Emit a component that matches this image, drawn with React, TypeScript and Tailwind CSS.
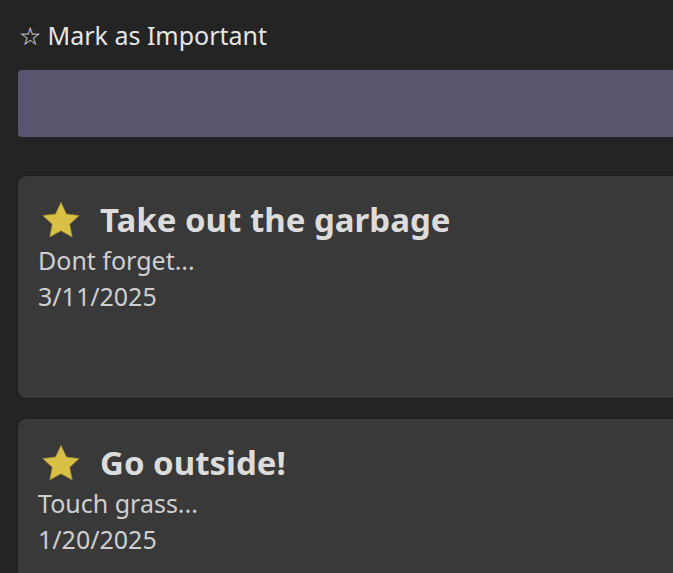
import React from "react";

function Star() {
  return (
    <svg width="40" height="38" viewBox="0 0 24 23" className="shrink-0">
      <path
        d="M12 0.8l3.3 7.1 7.7.9-5.7 5.3 1.5 7.7L12 18l-6.8 3.8 1.5-7.7L1 8.8l7.7-.9z"
        fill="#d9c046"
        stroke="#a08a2a"
        strokeWidth="0.4"
      />
    </svg>
  );
}

function Card({ title, body, date }: { title: string; body: string; date: string }) {
  return (
    <div className="rounded-lg bg-[#393939] pl-[20px] pt-[24px] pb-[20px] h-[222px] shadow-[0_0_2px_rgba(0,0,0,0.6)]">
      <div className="flex items-center gap-[19px] pl-[3px]">
        <Star />
        <span className="text-[33px] font-bold leading-[40px] text-[#dcdcdc]">{title}</span>
      </div>
      <div className="text-[25px] leading-[36px] text-[#cfcfcf] mt-[2px]">{body}</div>
      <div className="text-[25px] leading-[36px] text-[#cfcfcf]">{date}</div>
    </div>
  );
}

export default function App() {
  return (
    <div
      className="w-[673px] h-[573px] overflow-hidden bg-[#242424] pl-[18px] pt-[18px]"
      style={{ fontFamily: '"Noto Sans", "Open Sans", sans-serif' }}
    >
      <div className="text-[25px] leading-[34px] text-[#e6e6e6] pl-[1px]">☆ Mark as Important</div>
      <div className="mt-[18px] h-[67px] w-[700px] rounded bg-[#58566e]" />
      <div className="mt-[39px] w-[700px] flex flex-col gap-[21px]">
        <Card title="Take out the garbage" body="Dont forget..." date="3/11/2025" />
        <Card title="Go outside!" body="Touch grass..." date="1/20/2025" />
      </div>
    </div>
  );
}
